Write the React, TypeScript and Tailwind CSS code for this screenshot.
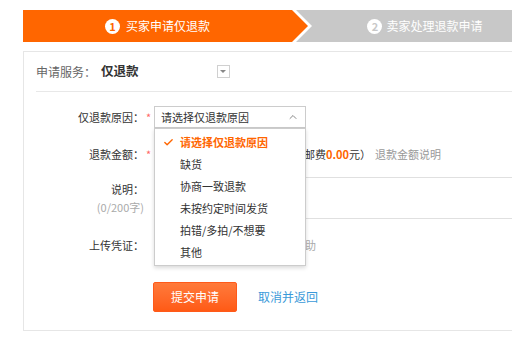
import React from 'react';
import { Check, ChevronUp } from 'lucide-react';

const reasons = ['请选择仅退款原因', '缺货', '协商一致退款', '未按约定时间发货', '拍错/多拍/不想要', '其他'];

const Label: React.FC<{ text: string; required?: boolean }> = ({ text, required }) => (
  <div className="flex shrink-0">
    <div className="w-[108px] text-right text-[#333]">{text}</div>
    <div className="w-[10px] pl-[2px] text-[#f66] leading-[16px]">{required ? '*' : ''}</div>
  </div>
);

const App: React.FC = () => {
  return (
    <div className="w-[512px] h-[340px] overflow-hidden bg-white font-['Noto_Sans_CJK_SC',sans-serif]">
      {/* Steps */}
      <div className="ml-[23px] mt-[10px] flex h-[32px] w-[515px] bg-[#c8c8c8]">
        <div className="h-full w-[289px] shrink-0 bg-white [clip-path:polygon(0_0,273px_0,100%_50%,273px_100%,0_100%)]">
          <div className="flex h-full w-[285px] items-center justify-center gap-[6px] bg-[#ff6600] pr-4 [clip-path:polygon(0_0,269px_0,100%_50%,269px_100%,0_100%)]">
            <span className="flex h-[15px] w-[15px] items-center justify-center rounded-full bg-white text-[11px] font-bold leading-none text-[#ff6600]">1</span>
            <span className="text-[12px] text-white">买家申请仅退款</span>
          </div>
        </div>
        <div className="flex flex-1 items-center justify-center gap-[4px]">
          <span className="flex h-[15px] w-[15px] items-center justify-center rounded-full bg-white text-[11px] font-bold leading-none text-[#c8c8c8]">2</span>
          <span className="text-[12px] text-white">卖家处理退款申请</span>
        </div>
      </div>

      {/* Panel */}
      <div className="ml-[23px] mt-[9px] h-[280px] w-[560px] border border-[#e6e6e6] px-[12px]">
        <div className="flex h-[40px] items-center border-b border-[#e8e8e8] text-[12px]">
          <span className="text-[#666]">申请服务：</span>
          <span className="ml-[5px] text-[12.5px] font-bold text-[#333]">仅退款</span>
          <span className="ml-[78px] flex h-[13px] w-[13px] items-center justify-center border border-[#d0d0d0]">
            <span className="h-0 w-0 border-x-[3px] border-t-[3px] border-x-transparent border-t-[#888]" />
          </span>
        </div>

        <div className="text-[11px]">
          {/* reason */}
          <div className="mt-[14px] flex items-center">
            <Label text="仅退款原因：" required />
            <div className="relative z-10">
              <div className="flex h-[22px] w-[152px] items-center justify-between border border-[#ccc] pl-[6px] pr-[6px] text-[#333]">
                <span>请选择仅退款原因</span>
                <ChevronUp size={12} className="text-[#888]" />
              </div>
              <div className="absolute left-0 top-full w-[152px] border border-[#ccc] bg-white py-[2px] shadow-[0_2px_4px_rgba(0,0,0,0.15)]">
                {reasons.map((r, i) => (
                  <div key={r} className="flex h-[22px] items-center pl-[8px]">
                    <span className="w-[17px]">
                      {i === 0 && <Check size={11} strokeWidth={3} className="text-[#ff6600]" />}
                    </span>
                    <span className={i === 0 ? 'text-[#ff6600] font-bold' : 'text-[#333]'}>{r}</span>
                  </div>
                ))}
              </div>
            </div>
          </div>

          {/* amount */}
          <div className="mt-[15px] flex items-center">
            <Label text="退款金额：" required />
            <div className="h-[22px] w-[120px] border border-[#ccc]" />
            <span className="ml-[8px] text-[#333]">
              （含邮费<span className="font-bold text-[#ff6600]">0.00</span>元）
            </span>
            <span className="ml-[4px] text-[#999]">退款金额说明</span>
          </div>

          {/* description */}
          <div className="mt-[12px] flex">
            <div className="flex w-[108px] shrink-0 flex-col items-end pt-[4px]">
              <span className="text-[#333]">说明：</span>
              <span className="mt-[1px] text-[#aaa]">(0/200字)</span>
            </div>
            <div className="w-[10px] shrink-0" />
            <div className="h-[42px] w-[400px] border border-[#e0e0e0]" />
          </div>

          {/* upload */}
          <div className="mt-[15px] flex h-[22px] items-center">
            <Label text="上传凭证：" />
            <div className="h-[22px] w-[72px] border border-[#ccc]" />
            <span className="ml-[24px] text-[#aaa]">上传说明帮助</span>
          </div>

          {/* actions */}
          <div className="mt-[26px] flex items-center pl-[117px] text-[12px]">
            <button className="h-[30px] w-[84px] rounded-[2px] border border-[#ff5a1a] bg-gradient-to-b from-[#ff7a3a] to-[#ff5a14] text-white">
              提交申请
            </button>
            <a className="ml-[21px] text-[#3a9ad9]">取消并返回</a>
          </div>
        </div>
      </div>
    </div>
  );
};

export default App;
